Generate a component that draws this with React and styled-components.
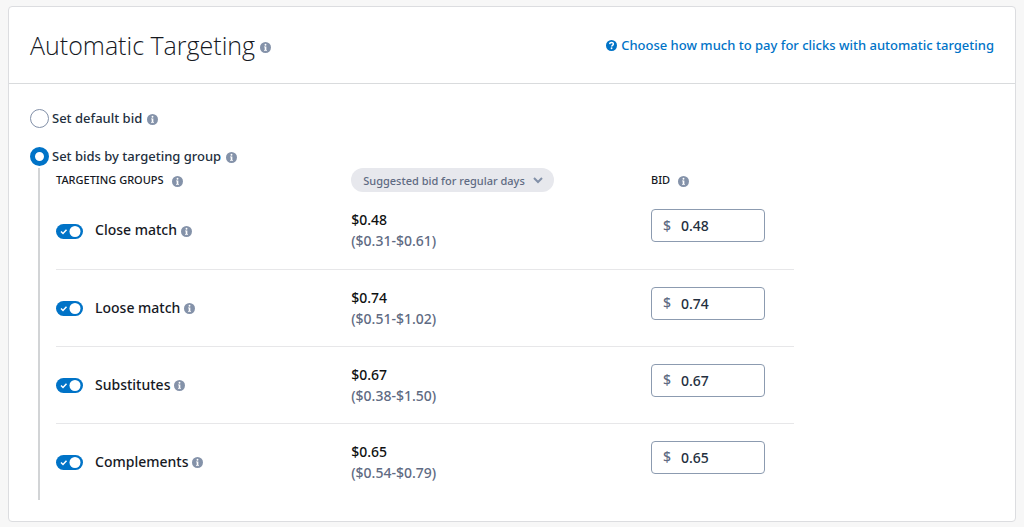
import React, { useState } from "react";
import styled, { createGlobalStyle } from "styled-components";

const GlobalStyle = createGlobalStyle`
  *, *::before, *::after { box-sizing: border-box; }
  body {
    margin: 0;
    background: #f7f7f7;
    color: #16191f;
    font-family: "Noto Sans", "Open Sans", sans-serif;
    font-size: 14px;
    font-weight: 500;
    line-height: 20px;
  }
`;

const Page = styled.main`
  padding: 6px 8px;
`;

const Panel = styled.section`
  background: #fff;
  border: 1px solid #dcdde0;
  border-radius: 4px;
`;

const Header = styled.header`
  display: flex;
  align-items: center;
  justify-content: space-between;
  min-height: 77px;
  padding: 0 21px;
  border-bottom: 1px solid #d9dbdd;
`;

const TitleGroup = styled.div`
  display: flex;
  align-items: center;
  gap: 5px;
  padding-top: 3px;
`;

const Title = styled.h1`
  margin: 0;
  padding-bottom: 4px;
  color: #16191f;
  font-family: "Open Sans", "Noto Sans", sans-serif;
  font-size: 25px;
  font-weight: 300;
  line-height: 34px;
`;

const HelpLink = styled.a`
  display: flex;
  align-items: center;
  gap: 4px;
  color: #0073c7;
  font-size: 13px;
  text-decoration: none;
`;

const Body = styled.div`
  padding: 24px 21px 21px;
`;

const Option = styled.div`
  display: flex;
  align-items: center;
  height: 20px;
  margin-bottom: ${(p) => (p.$last ? 0 : "18px")};
  color: #232f3e;
`;

const OptionLabel = styled.label`
  display: flex;
  align-items: center;
  gap: 3px;
  font-size: 13px;
`;

const Radio = styled.input`
  appearance: none;
  width: 19px;
  height: 19px;
  margin: 0;
  border: 1px solid #8290a8;
  border-radius: 50%;
  background: #fff;

  &:checked {
    border: 5px solid #0073c7;
  }
`;

const IconWrap = styled.span`
  display: inline-flex;
  margin-left: ${(p) => p.$gap || 0}px;
  padding-top: 2px;
`;

const Group = styled.div`
  margin: 2px 0 0 8px;
  padding-left: 16px;
  border-left: 2px solid #d2d4d6;
`;

const BidTable = styled.table`
  width: 100%;
  max-width: 738px;
  border-collapse: collapse;
  table-layout: fixed;
`;

const HeadCell = styled.th`
  width: ${(p) => p.$width};
  height: 24px;
  padding: 0;
  font-size: 11px;
  font-weight: 500;
  text-align: left;
  text-transform: uppercase;
`;

const HeadLabel = styled.span`
  display: flex;
  align-items: center;
  gap: 8px;
  line-height: 20px;
`;

const Row = styled.tr`
  border-bottom: 1px solid #e7e7e9;

  &:last-child {
    border-bottom: 0;
  }
`;

const Cell = styled.td`
  height: 77px;
  padding: 0;
  vertical-align: ${(p) => p.$align || "middle"};
`;

const TargetLabel = styled.div`
  display: flex;
  align-items: center;
  font-size: 14px;
`;

const Switch = styled.span`
  position: relative;
  display: inline-flex;
  width: 27px;
  height: 15px;
  margin: 2px 12px 0 0;
`;

const SwitchInput = styled.input`
  appearance: none;
  width: 27px;
  height: 15px;
  margin: 0;
  border-radius: 8px;
  background: ${(p) => (p.checked ? "#0073c7" : "#8290a8")};
`;

const SwitchMark = styled.svg`
  position: absolute;
  inset: 0;
  pointer-events: none;
`;

const Select = styled.span`
  position: relative;
  display: inline-flex;
  align-items: center;
  vertical-align: top;
`;

const SelectBox = styled.select`
  appearance: none;
  width: 203px;
  height: 24px;
  padding: 0 24px 0 12px;
  border: 0;
  border-radius: 13px;
  background: #e7e8ed;
  color: #5f6b83;
  font: 500 11px "Noto Sans", sans-serif;
`;

const Chevron = styled.svg`
  position: absolute;
  right: 11px;
  pointer-events: none;
`;

const Price = styled.div`
  color: #0f1111;
  font-size: 14px;
  line-height: 21px;
`;

const Range = styled(Price)`
  color: #5f6b83;
`;

const BidField = styled.label`
  display: flex;
  align-items: center;
  gap: 10px;
  width: 114px;
  height: 33px;
  margin-top: 17px;
  padding: 0 11px;
  border: 1px solid #8c9bb0;
  border-radius: 4px;
  color: #5f6b83;
  font-size: 14px;
`;

const BidInput = styled.input`
  flex: 1;
  min-width: 0;
  padding: 0;
  border: 0;
  outline: 0;
  background: transparent;
  color: #232f3e;
  font: 500 14px "Noto Sans", sans-serif;
`;

function InfoIcon({ gap, label }) {
  return (
    <IconWrap $gap={gap}>
      <svg width="11" height="11" viewBox="0 0 22 22" role="img" aria-label={label}>
        <circle cx="11" cy="11" r="11" fill="#8492a9" />
        <circle cx="11" cy="5.6" r="1.9" fill="#fff" />
        <path d="M8 9h4.700v7H14v1.700H8V16h1.400v-5.300H8z" fill="#fff" />
      </svg>
    </IconWrap>
  );
}

function HelpIcon() {
  return (
    <svg width="11" height="11" viewBox="0 0 22 22" aria-hidden="true">
      <circle cx="11" cy="11" r="11" fill="#0073c7" />
      <path d="M7.200 8.200C7.400 3.800 15 3.900 14.700 8.200c-.2 2.500-3.500 2.400-3.500 5" fill="none" stroke="#fff" strokeWidth="2.800" />
      <circle cx="11.100" cy="16.500" r="1.800" fill="#fff" />
    </svg>
  );
}

const targets = [
  { name: "Close match", bid: "0.48", range: "($0.31-$0.61)" },
  { name: "Loose match", bid: "0.74", range: "($0.51-$1.02)" },
  { name: "Substitutes", bid: "0.67", range: "($0.38-$1.50)" },
  { name: "Complements", bid: "0.65", range: "($0.54-$0.79)" },
];

function TargetRow({ name, bid, range }) {
  const [on, setOn] = useState(true);
  const id = name.toLowerCase().replace(" ", "-");
  return (
    <Row>
      <Cell>
        <TargetLabel>
          <Switch>
            <SwitchInput id={id} type="checkbox" role="switch" checked={on} onChange={() => setOn(!on)} />
            <SwitchMark width="27" height="15" viewBox="0 0 27 15" aria-hidden="true">
              {on && <path d="M5 7.500l2 2 3.500-3.800" fill="none" stroke="#fff" strokeWidth="1.500" />}
              <circle cx={on ? 19 : 8} cy="7.500" r="5.500" fill="#fff" />
            </SwitchMark>
          </Switch>
          <label htmlFor={id}>{name}</label>
          <InfoIcon gap={4} label={`About ${name}`} />
        </TargetLabel>
      </Cell>
      <Cell>
        <Price>${bid}</Price>
        <Range>{range}</Range>
      </Cell>
      <Cell $align="top">
        <BidField>
          $
          <BidInput type="text" inputMode="decimal" defaultValue={bid} aria-label={`${name} bid`} />
        </BidField>
      </Cell>
    </Row>
  );
}

export default function App() {
  const [mode, setMode] = useState("group");
  return (
    <>
      <GlobalStyle />
      <Page>
        <Panel>
          <Header>
            <TitleGroup>
              <Title>Automatic Targeting</Title>
              <InfoIcon label="About automatic targeting" />
            </TitleGroup>
            <HelpLink href="#help">
              <HelpIcon />
              Choose how much to pay for clicks with automatic targeting
            </HelpLink>
          </Header>
          <Body>
            <Option>
              <OptionLabel>
                <Radio type="radio" name="mode" checked={mode === "default"} onChange={() => setMode("default")} />
                Set default bid
              </OptionLabel>
              <InfoIcon gap={5} label="About default bid" />
            </Option>
            <Option $last>
              <OptionLabel>
                <Radio type="radio" name="mode" checked={mode === "group"} onChange={() => setMode("group")} />
                Set bids by targeting group
              </OptionLabel>
              <InfoIcon gap={5} label="About bids by targeting group" />
            </Option>
            <Group>
              <BidTable>
                <thead>
                  <tr>
                    <HeadCell $width="40%">
                      <HeadLabel>
                        Targeting groups
                        <InfoIcon label="About targeting groups" />
                      </HeadLabel>
                    </HeadCell>
                    <HeadCell $width="auto">
                      <Select>
                        <SelectBox aria-label="Suggested bid">
                          <option>Suggested bid for regular days</option>
                        </SelectBox>
                        <Chevron width="10" height="7" viewBox="0 0 10 7" aria-hidden="true">
                          <path d="M1 1l4 4 4-4" fill="none" stroke="#8290a8" strokeWidth="2" />
                        </Chevron>
                      </Select>
                    </HeadCell>
                    <HeadCell $width="143px">
                      <HeadLabel>
                        Bid
                        <InfoIcon label="About bid" />
                      </HeadLabel>
                    </HeadCell>
                  </tr>
                </thead>
                <tbody>
                  {targets.map((target) => (
                    <TargetRow key={target.name} {...target} />
                  ))}
                </tbody>
              </BidTable>
            </Group>
          </Body>
        </Panel>
      </Page>
    </>
  );
}
